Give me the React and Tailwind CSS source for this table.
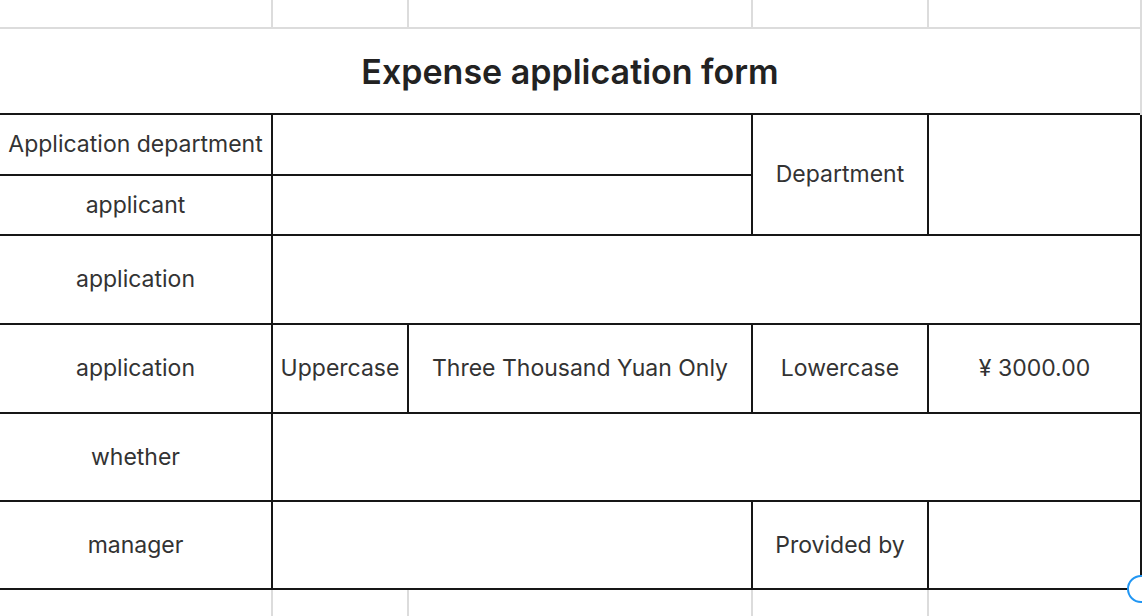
import React from 'react';

const line = 'border-[#161616]';
const light = 'border-[#dcdcdc]';

function Cell({ className = '', children }) {
  return (
    <div
      className={`flex items-center justify-center border-r-2 border-b-2 ${line} text-[23px] text-[#333333] ${className}`}
    >
      {children}
    </div>
  );
}

export default function App() {
  return (
    <div
      className="relative h-[616px] w-[1142px] overflow-hidden bg-white"
      style={{ fontFamily: 'Inter, "Liberation Sans", sans-serif' }}
    >
      <div className="grid grid-cols-[273px_136px_344px_176px_213px] grid-rows-[29px_86px_61px_60px_89px_89px_88px_88px_27px]">
        {/* header strip */}
        <div className={`border-r-2 border-b-2 ${light}`} />
        <div className={`border-r-2 border-b-2 ${light}`} />
        <div className={`border-r-2 border-b-2 ${light}`} />
        <div className={`border-r-2 border-b-2 ${light}`} />
        <div className={`border-r-2 border-b-2 ${light}`} />

        {/* title */}
        <div className="col-span-5 flex border-r-2 border-[#dcdcdc]">
          <div
            className={`flex flex-1 items-center justify-center border-b-2 ${line} text-[34px] font-semibold text-[#222222]`}
          >
            Expense application form
          </div>
        </div>

        <Cell>Application department</Cell>
        <Cell className="col-span-2" />
        <Cell className="row-span-2">Department</Cell>
        <Cell className="row-span-2" />

        <Cell>applicant</Cell>
        <Cell className="col-span-2" />

        <Cell>application</Cell>
        <Cell className="col-span-4" />

        <Cell>application</Cell>
        <Cell>Uppercase</Cell>
        <Cell>Three Thousand Yuan Only</Cell>
        <Cell>Lowercase</Cell>
        <Cell>¥ 3000.00</Cell>

        <Cell>whether</Cell>
        <Cell className="col-span-4" />

        <Cell>manager</Cell>
        <Cell className="col-span-2" />
        <Cell>Provided by</Cell>
        <Cell />

        {/* trailing strip */}
        <div className={`border-r-2 ${light}`} />
        <div className={`border-r-2 ${light}`} />
        <div className={`border-r-2 ${light}`} />
        <div className={`border-r-2 ${light}`} />
        <div />
      </div>

      {/* resize handle */}
      <div className="absolute left-[1127px] top-[575px] h-[28px] w-[28px] rounded-full border-2 border-[#2196f3] bg-white" />
    </div>
  );
}
